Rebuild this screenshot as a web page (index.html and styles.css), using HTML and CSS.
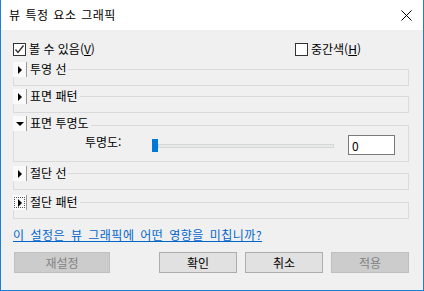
FILE: index.html
```html
<!DOCTYPE html>
<html lang="ko">
<head>
    <meta charset="UTF-8">
    <title>뷰 특정 요소 그래픽</title>
    <link rel="stylesheet" href="styles.css">
</head>
<body>
    <div class="window">
        <div class="titlebar">
            <span class="title">뷰 특정 요소 그래픽</span>
            <span class="close">
                <svg width="11" height="11" viewBox="0 0 11 11"><path d="M0.5 0.5 L10.5 10.5 M10.5 0.5 L0.5 10.5" stroke="#000" stroke-width="1" fill="none"/></svg>
            </span>
        </div>

        <div class="content">
            <div class="check-row">
                <label class="check check-first">
                    <span class="box">
                        <svg width="11" height="11" viewBox="0 0 11 11"><path d="M1.5 5.5 L4 8.5 L9.5 1.5" stroke="#333" stroke-width="1.4" fill="none"/></svg>
                    </span>
                    볼 수 있음(<u>V</u>)
                </label>
                <label class="check">
                    <span class="box"></span>
                    중간색(<u>H</u>)
                </label>
            </div>

            <div class="group">
                <div class="group-head">
                    <span class="toggle"><span class="tri-right"></span></span>
                    <span class="group-title">투영 선</span>
                    <span class="group-line"></span>
                </div>
                <div class="group-body"></div>
            </div>

            <div class="group group-tight">
                <div class="group-head">
                    <span class="toggle"><span class="tri-right"></span></span>
                    <span class="group-title">표면 패턴</span>
                    <span class="group-line"></span>
                </div>
                <div class="group-body"></div>
            </div>

            <div class="group group-tight">
                <div class="group-head">
                    <span class="toggle"><span class="tri-down"></span></span>
                    <span class="group-title">표면 투명도</span>
                    <span class="group-line group-line-low"></span>
                </div>
                <div class="group-body group-body-open">
                    <span class="field-label">투명도:</span>
                    <div class="slider">
                        <span class="slider-thumb"></span>
                        <span class="slider-track"></span>
                    </div>
                    <input class="num-input" type="text" value="0">
                </div>
            </div>

            <div class="group">
                <div class="group-head">
                    <span class="toggle"><span class="tri-right"></span></span>
                    <span class="group-title">절단 선</span>
                    <span class="group-line"></span>
                </div>
                <div class="group-body"></div>
            </div>

            <div class="group group-loose">
                <div class="group-head">
                    <span class="toggle"><span class="focus"><span class="tri-right"></span></span></span>
                    <span class="group-title">절단 패턴</span>
                    <span class="group-line"></span>
                </div>
                <div class="group-body"></div>
            </div>

            <a class="help-link" href="#">이 설정은 뷰 그래픽에 어떤 영향을 미칩니까?</a>

            <div class="buttons">
                <button class="btn btn-wide" disabled>재설정</button>
                <span class="spacer"></span>
                <button class="btn">확인</button>
                <button class="btn">취소</button>
                <button class="btn" disabled>적용</button>
            </div>
        </div>
    </div>
</body>
</html>
```

FILE: styles.css
```css
body {
    margin: 0;
    padding: 0;
    font-family: "Noto Sans CJK KR", "Liberation Sans", sans-serif;
    font-size: 12px;
    line-height: 14px;
    color: #000;
    background: #f0f0f0;
}

.window {
    width: 424px;
    height: 291px;
    box-sizing: border-box;
    border: 1px solid #1c7fd6;
    border-top: none;
    background: #f0f0f0;
}

.titlebar {
    height: 30px;
    background: #fff;
    display: flex;
    align-items: center;
    padding-left: 8px;
}

.title {
    flex: 1;
    letter-spacing: 0.5px;
    word-spacing: 1px;
}

.close {
    width: 11px;
    height: 11px;
    margin-right: 11px;
    display: flex;
}

.content {
    padding: 12px 14px 0 12px;
}

.check-row {
    display: flex;
    height: 14px;
    align-items: center;
}

.check {
    display: flex;
    align-items: center;
    white-space: nowrap;
}

.check-first {
    flex: 0 0 282px;
}

.box {
    width: 11px;
    height: 11px;
    border: 1px solid #333;
    background: #fff;
    margin-right: 3px;
    display: flex;
}

/* collapsible groups */
.group {
    margin-top: 3px;
}

.check-row + .group {
    margin-top: 5px;
}

.group-tight {
    margin-top: 2px;
}

.group-loose {
    margin-top: 4px;
}

.group-head {
    display: flex;
    height: 16px;
}

.toggle {
    width: 13px;
    height: 15px;
    margin-top: 1px;
    background: #fafafa;
    border-right: 1px solid #9a9a9a;
    display: flex;
    align-items: center;
    justify-content: center;
}

.tri-right {
    width: 0;
    height: 0;
    border-top: 4px solid transparent;
    border-bottom: 4px solid transparent;
    border-left: 4px solid #000;
    margin-left: 1px;
}

.tri-down {
    width: 0;
    height: 0;
    border-left: 4px solid transparent;
    border-right: 4px solid transparent;
    border-top: 4px solid #000;
}

.focus {
    display: flex;
    align-items: center;
    justify-content: center;
    width: 9px;
    height: 9px;
    border: 1px dotted #555;
}

.group-title {
    padding-left: 3px;
    padding-right: 2px;
    line-height: 16px;
}

.group-line {
    flex: 1;
    margin-top: 8px;
    border-top: 1px solid #dadada;
    border-right: 1px solid #dadada;
}

.group-line-low {
    margin-top: 10px;
}

.group-body {
    height: 8px;
    border: 1px solid #dadada;
    border-top: none;
}

.group-body-open {
    box-sizing: border-box;
    height: 31px;
    padding: 3px 0 0 71px;
    display: flex;
    align-items: flex-start;
}

.field-label {
    width: 40px;
    margin-top: 1px;
}

.slider {
    display: flex;
    align-items: center;
    width: 182px;
    height: 13px;
    margin: 5px 0 0 27px;
}

.slider-thumb {
    width: 6px;
    height: 13px;
    background: #0078d7;
}

.slider-track {
    flex: 1;
    height: 2px;
    background: #e7eaea;
    border: 1px solid #d6d6d6;
}

.num-input {
    width: 47px;
    height: 20px;
    box-sizing: border-box;
    margin: 1px 0 0 14px;
    border: 1px solid #7a7a7a;
    background: #fff;
    padding: 0 3px;
    font-family: "Noto Sans CJK KR", "Liberation Sans", sans-serif;
    font-size: 12px;
    outline: none;
}

.help-link {
    display: block;
    margin-top: 9px;
    color: #0066cc;
    text-decoration: underline;
    white-space: nowrap;
    letter-spacing: 0.5px;
    word-spacing: 2px;
}

.buttons {
    display: flex;
    margin-top: 10px;
    padding-left: 1px;
}

.spacer {
    flex: 1;
}

.btn {
    width: 78px;
    height: 21px;
    margin-left: 8px;
    padding: 0;
    background: #e1e1e1;
    border: 1px solid #adadad;
    font-family: "Noto Sans CJK KR", "Liberation Sans", sans-serif;
    font-size: 12px;
    color: #000;
}

.btn:disabled {
    background: #cccccc;
    border-color: #bfbfbf;
    color: #838383;
}

.btn-wide {
    width: 96px;
    margin-left: 0;
}
```
